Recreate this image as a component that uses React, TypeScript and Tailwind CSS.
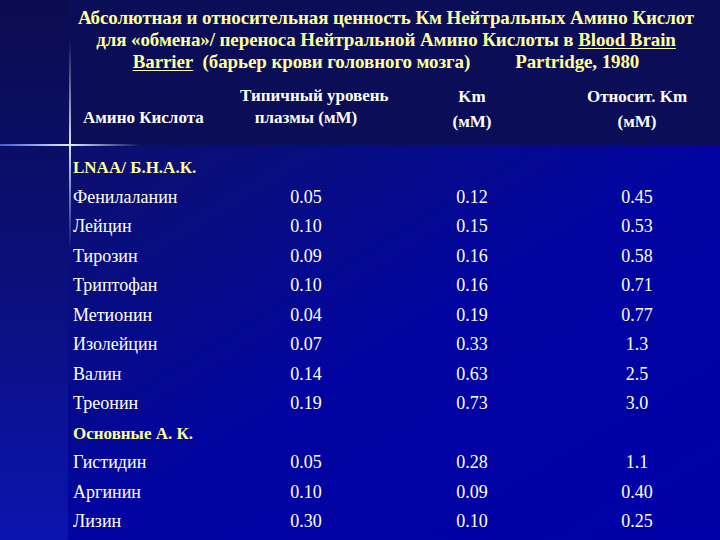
const rows: { name: string; a?: string; b?: string; c?: string; group?: boolean }[] = [
  { name: "LNAA/ Б.Н.А.К.", group: true },
  { name: "Фенилаланин", a: "0.05", b: "0.12", c: "0.45" },
  { name: "Лейцин", a: "0.10", b: "0.15", c: "0.53" },
  { name: "Тирозин", a: "0.09", b: "0.16", c: "0.58" },
  { name: "Триптофан", a: "0.10", b: "0.16", c: "0.71" },
  { name: "Метионин", a: "0.04", b: "0.19", c: "0.77" },
  { name: "Изолейцин", a: "0.07", b: "0.33", c: "1.3" },
  { name: "Валин", a: "0.14", b: "0.63", c: "2.5" },
  { name: "Треонин", a: "0.19", b: "0.73", c: "3.0" },
  { name: "Основные А. К.", group: true },
  { name: "Гистидин", a: "0.05", b: "0.28", c: "1.1" },
  { name: "Аргинин", a: "0.10", b: "0.09", c: "0.40" },
  { name: "Лизин", a: "0.30", b: "0.10", c: "0.25" },
];

const grid = "grid grid-cols-[167px_132px_200px_130px]";

export default function App() {
  return (
    <div
      className="relative flex w-[720px] h-[540px] overflow-hidden text-white"
      style={{ fontFamily: '"Liberation Serif", "Times New Roman", serif' }}
    >
      {/* left strip */}
      <div className="w-[68px] shrink-0 bg-linear-to-b from-[#0b0c4f] via-[#0b0f78] to-[#0b14b0]" />

      <div className="flex flex-col flex-1">
        {/* header band */}
        <div className="h-[145px] shrink-0 bg-[#0b0d56] pt-[7px]">
          <h1 className="text-center text-[19px] leading-[22px] font-bold tracking-[-0.1px] text-[#ffff99] whitespace-nowrap pr-[16px]">
            Абсолютная и относительная ценность Км Нейтральных Амино Кислот
            <br />
            для «обмена»/ переноса Нейтральной Амино Кислоты в{" "}
            <span className="underline underline-offset-2">Blood Brain</span>
            <br />
            <span className="underline underline-offset-2">Barrier</span>
            &nbsp; (барьер крови головного мозга)
            <span className="ml-[45px]">Partridge, 1980</span>
          </h1>
          <div className={`${grid} pl-[5px] mt-[12px] text-[17px] font-bold leading-[22px] whitespace-nowrap`}>
            <div className="pl-[10px] pt-[22px]">Амино Кислота</div>
            <div className="text-center">
              Типичный уровень
              <br />
              плазмы (мМ)
            </div>
            <div className="text-center leading-[25px] -mt-[1px]">
              Km
              <br />
              (мМ)
            </div>
            <div className="text-center leading-[25px] -mt-[1px]">
              Относит. Km
              <br />
              (мМ)
            </div>
          </div>
        </div>

        {/* table body */}
        <div className="flex-1 pt-[8px] pl-[5px] bg-linear-to-br from-[#0b0f6c] via-[#0204a0] to-[#0000a8]">
          {rows.map((r) => (
            <div key={r.name} className={`${grid} h-[29.5px] items-center text-[18px]`}>
              {r.group ? (
                <div className="font-bold text-[17px] text-[#ffff99] whitespace-nowrap">{r.name}</div>
              ) : (
                <>
                  <div>{r.name}</div>
                  <div className="text-center">{r.a}</div>
                  <div className="text-center">{r.b}</div>
                  <div className="text-center">{r.c}</div>
                </>
              )}
            </div>
          ))}
        </div>
      </div>

      {/* glowing cross lines */}
      <div className="absolute left-[69px] top-[40px] w-[2px] h-[210px] bg-linear-to-b from-transparent via-[#d8e4ff] to-transparent" />
      <div className="absolute left-0 top-[144px] w-[140px] h-[2px] bg-linear-to-r from-[#3d5ad8] via-[#e6eeff] to-transparent" />
    </div>
  );
}
